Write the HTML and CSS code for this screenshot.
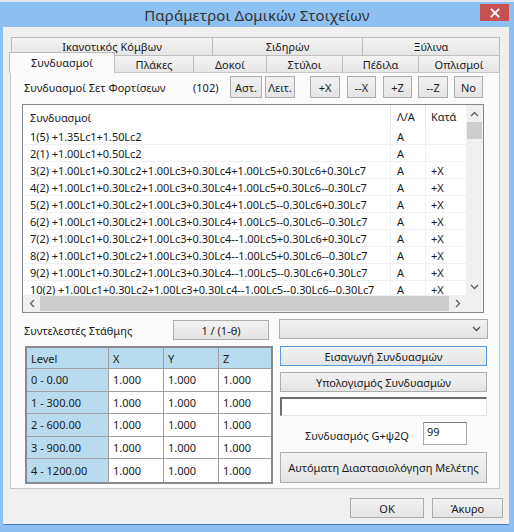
FILE: index.html
```html
<!DOCTYPE html>
<html lang="el">
<head>
<meta charset="utf-8">
<title>Παράμετροι Δομικών Στοιχείων</title>
<link rel="stylesheet" href="styles.css">
</head>
<body>
<div class="window">
  <div class="topstrip"></div>
  <div class="titlebar">
    <span></span>
    <span class="title">Παράμετροι Δομικών Στοιχείων</span>
    <div class="closewrap">
      <div class="close">
        <svg width="10" height="10" viewBox="0 0 10 10"><path d="M1.5 1.5 L8.5 8.5 M8.5 1.5 L1.5 8.5" stroke="#fff" stroke-width="1.8" stroke-linecap="square"/></svg>
      </div>
    </div>
  </div>
  <div class="client">
    <div class="tabctl">
      <div class="tabrow row1">
        <div class="tab t-ik">Ικανοτικός Κόμβων</div>
        <div class="tab t-sid">Σιδηρών</div>
        <div class="tab t-xyl last">Ξύλινα</div>
      </div>
      <div class="tabrow row2">
        <div class="tab sel t-syn">Συνδυασμοί</div>
        <div class="tab t-pl">Πλάκες</div>
        <div class="tab t-dok">Δοκοί</div>
        <div class="tab t-sty">Στύλοι</div>
        <div class="tab t-ped">Πέδιλα</div>
        <div class="tab t-opl last">Οπλισμοί</div>
      </div>
      <div class="panel">
        <div class="toolbar">
          <span class="tb-label">Συνδυασμοί Σετ Φορτίσεων</span>
          <span class="tb-count">(102)</span>
          <div class="btn b-ast">Αστ.</div>
          <div class="btn b-leit">Λειτ.</div>
          <div class="btn b-px">+X</div>
          <div class="btn b-mx">--X</div>
          <div class="btn b-pz">+Z</div>
          <div class="btn b-mz">--Z</div>
          <div class="btn b-no">No</div>
        </div>
        <div class="list">
          <div class="list-body">
            <div class="lrow lhead">
              <div class="c1">Συνδυασμοί</div><div class="c2">Λ/Α</div><div class="c3">Κατά</div>
            </div>
            <div class="lrow"><div class="c1">1(5) +1.35Lc1+1.50Lc2</div><div class="c2">A</div><div class="c3"></div></div>
            <div class="lrow"><div class="c1">2(1) +1.00Lc1+0.50Lc2</div><div class="c2">A</div><div class="c3"></div></div>
            <div class="lrow"><div class="c1">3(2) +1.00Lc1+0.30Lc2+1.00Lc3+0.30Lc4+1.00Lc5+0.30Lc6+0.30Lc7</div><div class="c2">A</div><div class="c3">+X</div></div>
            <div class="lrow"><div class="c1">4(2) +1.00Lc1+0.30Lc2+1.00Lc3+0.30Lc4+1.00Lc5+0.30Lc6--0.30Lc7</div><div class="c2">A</div><div class="c3">+X</div></div>
            <div class="lrow"><div class="c1">5(2) +1.00Lc1+0.30Lc2+1.00Lc3+0.30Lc4+1.00Lc5--0.30Lc6+0.30Lc7</div><div class="c2">A</div><div class="c3">+X</div></div>
            <div class="lrow"><div class="c1">6(2) +1.00Lc1+0.30Lc2+1.00Lc3+0.30Lc4+1.00Lc5--0.30Lc6--0.30Lc7</div><div class="c2">A</div><div class="c3">+X</div></div>
            <div class="lrow"><div class="c1">7(2) +1.00Lc1+0.30Lc2+1.00Lc3+0.30Lc4--1.00Lc5+0.30Lc6+0.30Lc7</div><div class="c2">A</div><div class="c3">+X</div></div>
            <div class="lrow"><div class="c1">8(2) +1.00Lc1+0.30Lc2+1.00Lc3+0.30Lc4--1.00Lc5+0.30Lc6--0.30Lc7</div><div class="c2">A</div><div class="c3">+X</div></div>
            <div class="lrow"><div class="c1">9(2) +1.00Lc1+0.30Lc2+1.00Lc3+0.30Lc4--1.00Lc5--0.30Lc6+0.30Lc7</div><div class="c2">A</div><div class="c3">+X</div></div>
            <div class="lrow"><div class="c1">10(2) +1.00Lc1+0.30Lc2+1.00Lc3+0.30Lc4--1.00Lc5--0.30Lc6--0.30Lc7</div><div class="c2">A</div><div class="c3">+X</div></div>
          </div>
          <div class="vscroll">
            <div class="arrow"><svg width="9" height="6" viewBox="0 0 9 6"><path d="M1 5 L4.5 1.5 L8 5" fill="none" stroke="#606060" stroke-width="1.3"/></svg></div>
            <div class="vthumb"></div>
            <div class="vtrack"></div>
            <div class="arrow"><svg width="9" height="6" viewBox="0 0 9 6"><path d="M1 1 L4.5 4.5 L8 1" fill="none" stroke="#606060" stroke-width="1.3"/></svg></div>
          </div>
          <div class="hscroll">
            <div class="arrow"><svg width="6" height="9" viewBox="0 0 6 9"><path d="M5 1 L1.5 4.5 L5 8" fill="none" stroke="#606060" stroke-width="1.3"/></svg></div>
            <div class="hthumb"></div>
            <div class="arrow"><svg width="6" height="9" viewBox="0 0 6 9"><path d="M1 1 L4.5 4.5 L1 8" fill="none" stroke="#606060" stroke-width="1.3"/></svg></div>
          </div>
          <div class="corner"></div>
        </div>
        <div class="lower">
          <div class="leftcol">
            <div class="coefrow">
              <span class="coef-label">Συντελεστές Στάθμης</span>
              <div class="btn b-theta">1 / (1-θ)</div>
            </div>
            <div class="grid">
              <div class="g hd lv">Level</div><div class="g hd">X</div><div class="g hd">Y</div><div class="g hd e">Z</div>
              <div class="g lv">0 - 0.00</div><div class="g">1.000</div><div class="g">1.000</div><div class="g e">1.000</div>
              <div class="g lv">1 - 300.00</div><div class="g">1.000</div><div class="g">1.000</div><div class="g e">1.000</div>
              <div class="g lv">2 - 600.00</div><div class="g">1.000</div><div class="g">1.000</div><div class="g e">1.000</div>
              <div class="g lv">3 - 900.00</div><div class="g">1.000</div><div class="g">1.000</div><div class="g e">1.000</div>
              <div class="g lv b">4 - 1200.00</div><div class="g b">1.000</div><div class="g b">1.000</div><div class="g e b">1.000</div>
            </div>
          </div>
          <div class="rightcol">
            <div class="combo">
              <svg width="9" height="6" viewBox="0 0 9 6"><path d="M1 1 L4.5 4.5 L8 1" fill="none" stroke="#505050" stroke-width="1.3"/></svg>
            </div>
            <div class="btn wide focus b-eis">Εισαγωγή Συνδυασμών</div>
            <div class="btn wide b-ypo">Υπολογισμός Συνδυασμών</div>
            <div class="textbox"></div>
            <div class="gq-row">
              <span class="gq-label">Συνδυασμός G+ψ2Q</span>
              <div class="gq-input">99</div>
            </div>
            <div class="btn wide tall">Αυτόματη Διαστασιολόγηση Μελέτης</div>
          </div>
        </div>
      </div>
    </div>
    <div class="footer">
      <div class="btn b-ok">OK</div>
      <div class="btn b-cancel">Άκυρο</div>
    </div>
  </div>
</div>
</body>
</html>
```

FILE: styles.css
```css
* { box-sizing: border-box; }
html, body { margin: 0; padding: 0; }
body {
  width: 514px;
  height: 532px;
  overflow: hidden;
  font-family: "Noto Sans", "Open Sans", sans-serif;
  font-size: 11px;
  color: #000;
  background: #8cc1f2;
}
.window {
  width: 514px;
  height: 532px;
  background: #8cc1f2;
  display: flex;
  flex-direction: column;
}
.topstrip {
  height: 2px;
  background: #dfe6ee;
}
.titlebar {
  height: 25px;
  display: grid;
  grid-template-columns: 1fr auto 1fr;
  align-items: start;
}
.title {
  font-size: 15px;
  color: #333;
  line-height: 26px;
  letter-spacing: 0.1px;
}
.closewrap {
  display: flex;
  justify-content: flex-end;
  padding-right: 5px;
  padding-top: 2px;
}
.close {
  width: 29px;
  height: 17px;
  background: #c75050;
  display: flex;
  align-items: center;
  justify-content: center;
}
.client {
  margin: 0 5px 0 3px;
  height: 498px;
  background: #f0f0f0;
  display: flex;
  flex-direction: column;
  border-bottom: 1px solid #4a7fb8;
}
.tabctl {
  margin: 10px 0 0 7px;
  width: 490px;
  display: flex;
  flex-direction: column;
}
.tabrow {
  display: flex;
  padding-left: 1px;
}
.tab {
  border: 1px solid #bdbdbd;
  border-right: none;
  border-bottom: none;
  background: linear-gradient(#f4f4f4, #e6e6e6);
  display: flex;
  align-items: center;
  justify-content: center;
  color: #1a1a1a;
  white-space: nowrap;
}
.tab.last { border-right: 1px solid #bdbdbd; }
.row1 { height: 18px; }
.row1 .tab { height: 18px; }
.t-ik { width: 201px; }
.t-sid { width: 150px; }
.t-xyl { width: 138px; }
.row2 {
  height: 20px;
  margin-top: -3px;
  align-items: flex-start;
}
.row2 .tab { height: 17px; margin-top: 3px; }
.row2 .tab.sel {
  height: 21px;
  margin-top: 0;
  margin-left: -2px;
  background: #fbfbfb;
  border-right: 1px solid #bdbdbd;
  position: relative;
  z-index: 2;
  padding-bottom: 1px;
}
.t-syn { width: 106px; }
.row2 .tab.sel + .tab { border-left: none; }
.t-pl { width: 78px; }
.t-dok { width: 73px; }
.t-sty { width: 76px; }
.t-ped { width: 76px; }
.t-opl { width: 82px; }

.panel {
  height: 417px;
  border: 1px solid #c6c6c6;
  background: #fbfbfb;
  display: flex;
  flex-direction: column;
}
.toolbar {
  display: flex;
  align-items: center;
  height: 22px;
  margin: 3px 0 0 13px;
}
.tb-label { width: 169px; white-space: nowrap; color: #1a1a1a; }
.tb-count { width: 37px; color: #1a1a1a; }
.btn {
  border: 1px solid #acacac;
  background: linear-gradient(#f2f2f2, #e4e4e4);
  display: flex;
  align-items: center;
  justify-content: center;
  color: #1a1a1a;
  white-space: nowrap;
}
.toolbar .btn { height: 22px; }
.b-ast { width: 32px; }
.b-leit { width: 30px; margin-left: 3px; }
.b-px { width: 30px; margin-left: 15px; }
.b-mx { width: 29px; margin-left: 7px; }
.b-pz { width: 29px; margin-left: 7px; }
.b-mz { width: 30px; margin-left: 6px; }
.b-no { width: 29px; margin-left: 6px; }

.list {
  margin: 6px 0 0 11px;
  width: 462px;
  height: 209px;
  border: 1px solid #828790;
  background: #fff;
  display: grid;
  grid-template-columns: 443px 17px;
  grid-template-rows: 190px 17px;
}
.list-body {
  overflow: hidden;
  display: flex;
  flex-direction: column;
}
.lrow {
  display: flex;
  height: 17px;
  flex: none;
  border-bottom: 1px solid #f0f0f0;
  align-items: center;
  white-space: nowrap;
  color: #1a1a1a;
  letter-spacing: -0.07px;
}
.lrow.lhead {
  height: 23px;
  border-bottom: none;
}
.lrow .c1 { width: 368px; padding-left: 7px; overflow: hidden; height: 100%; display: flex; align-items: center; border-right: 1px solid #f0f0f0; }
.lrow .c2 { width: 35px; padding-left: 6px; height: 100%; display: flex; align-items: center; border-right: 1px solid #f0f0f0; }
.lrow .c3 { width: 40px; padding-left: 5px; height: 100%; display: flex; align-items: center; }
.lhead .c1, .lhead .c2 { border-right: 1px solid #e5e5e5; }
.lhead .c1 { padding-top: 1px; }

.vscroll {
  background: #f0f0f0;
  display: flex;
  flex-direction: column;
}
.arrow {
  width: 17px;
  height: 17px;
  display: flex;
  align-items: center;
  justify-content: center;
  flex: none;
}
.vthumb {
  height: 17px;
  margin: 0 1px;
  background: #cdcdcd;
  flex: none;
}
.vtrack { flex: 1; }
.hscroll {
  background: #f0f0f0;
  display: flex;
  align-items: center;
}
.hthumb {
  flex: 1;
  height: 15px;
  background: #cdcdcd;
}
.corner { background: #f0f0f0; }

.lower {
  display: flex;
}
.leftcol {
  width: 253px;
  margin-left: 11px;
  display: flex;
  flex-direction: column;
}
.coefrow {
  display: flex;
  align-items: center;
  height: 20px;
  margin-top: 7px;
}
.coef-label { width: 151px; padding-left: 2px; white-space: nowrap; color: #1a1a1a; }
.b-theta { width: 96px; height: 20px; }
.grid {
  margin: 6px 0 0 3px;
  width: 248px;
  border: 2px solid #8a8a8a;
  display: grid;
  grid-template-columns: 82px 55px 55px 52px;
  grid-template-rows: 21px repeat(5, 22.6px);
  background: #fff;
}
.g {
  border-right: 1px solid #a0a0a0;
  border-bottom: 1px solid #a0a0a0;
  padding-left: 4px;
  display: flex;
  align-items: center;
  color: #1a1a1a;
  white-space: nowrap;
}
.g.e { border-right: none; }
.g.b { border-bottom: none; }
.g.hd, .g.lv { background: #b9dbf0; }

.rightcol {
  width: 209px;
  margin: 6px 0 0 4px;
  display: flex;
  flex-direction: column;
}
.combo {
  height: 20px;
  border: 1px solid #acacac;
  background: linear-gradient(#f2f2f2, #e4e4e4);
  display: flex;
  align-items: center;
  justify-content: flex-end;
  padding-right: 6px;
}
.btn.wide { margin: 0 1px; height: 20px; }
.btn.focus { border-color: #5a9be0; }
.b-eis { margin-top: 7px !important; }
.b-ypo { margin-top: 6px !important; }
.textbox {
  margin: 5px 1px 0 1px;
  height: 19px;
  background: #fff;
  border-top: 2px solid #6e6e6e;
  border-left: 2px solid #6e6e6e;
  border-right: 1px solid #e3e3e3;
  border-bottom: 1px solid #e3e3e3;
}
.gq-row {
  display: flex;
  margin-top: 6px;
  height: 23px;
  align-items: center;
}
.gq-label {
  width: 144px;
  padding-left: 26px;
  white-space: nowrap;
  color: #1a1a1a;
  padding-top: 3px;
}
.gq-input {
  width: 44px;
  height: 23px;
  background: #fff;
  border: 1px solid #a9a9a9;
  border-top-color: #7a7a7a;
  padding: 1px 0 0 3px;
  color: #1a1a1a;
}
.btn.tall { height: 31px; margin-top: 7px; }

.footer {
  display: flex;
  justify-content: flex-end;
  gap: 8px;
  margin-top: 9px;
  padding-right: 6px;
}
.footer .btn { height: 20px; }
.b-ok { width: 74px; }
.b-cancel { width: 71px; }
```
